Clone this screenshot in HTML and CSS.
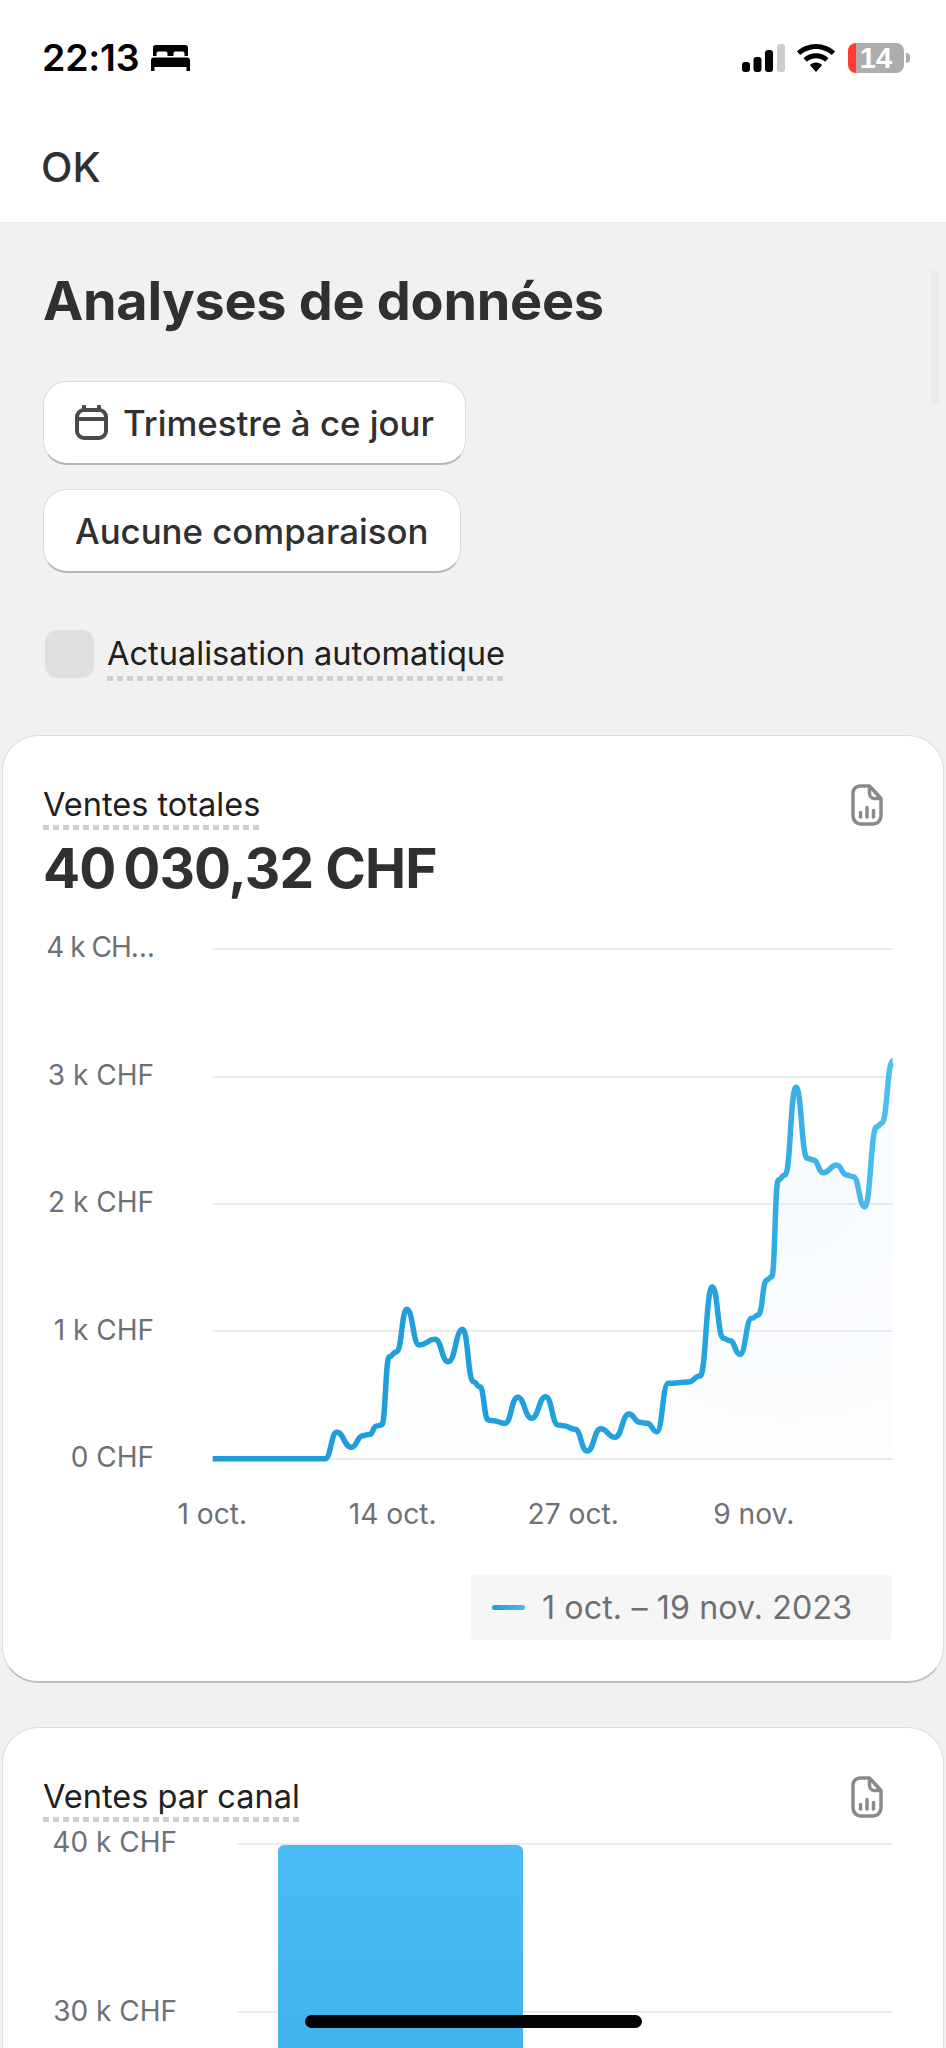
FILE: index.html
```html
<!DOCTYPE html>
<html lang="fr">
<head>
<meta charset="utf-8">
<title>Analyses de données</title>
<link rel="stylesheet" href="styles.css">
</head>
<body>
<header class="top">
  <div class="status">
    <div class="status-left">
      <span class="time">22:13</span>
      <svg class="bed" viewBox="0 0 39 26" aria-hidden="true"><path d="M5 0h29a3 3 0 0 1 3 3v8h-3.500V8.500a2 2 0 0 0-2-2h-7a2 2 0 0 0-2 2V11h-6V8.500a2 2 0 0 0-2-2h-7a2 2 0 0 0-2 2V11H2V3a3 3 0 0 1 3-3z"/><path d="M3 12.500h33a3 3 0 0 1 3 3V26h-3.500v-4h-32v4H0V15.500a3 3 0 0 1 3-3z"/></svg>
    </div>
    <div class="status-right">
      <svg class="signal" viewBox="0 0 43 28" aria-hidden="true"><rect x="0" y="18" width="8" height="10" rx="3"/><rect x="11.500" y="13" width="8" height="15" rx="3"/><rect x="23" y="6" width="8" height="22" rx="3"/><rect class="signal-off" x="35" y="0" width="8" height="28" rx="3"/></svg>
      <svg class="wifi" viewBox="0 0 38 28" aria-hidden="true"><path d="M19 0c7.300 0 14 2.800 19 7.500l-3.200 3.600C30.600 7.200 25 4.900 19 4.900S7.400 7.200 3.200 11.100L0 7.500C5 2.800 11.700 0 19 0z"/><path d="M19 9.300c4.800 0 9.200 1.800 12.500 4.900l-3.300 3.600c-2.400-2.200-5.700-3.600-9.200-3.600s-6.800 1.400-9.200 3.600l-3.300-3.600C9.800 11.100 14.200 9.300 19 9.300z"/><path d="M19 18.500c2.400 0 4.600.9 6.200 2.400L19 28l-6.200-7.100c1.600-1.500 3.800-2.400 6.200-2.400z"/></svg>
      <div class="battery"><span class="battery-level">14</span><span class="battery-nub"></span></div>
    </div>
  </div>
  <div class="nav">OK</div>
</header>

<main class="page">
  <section class="intro">
    <h1 class="title">Analyses de données</h1>
    <div class="filters">
      <button class="btn">
        <svg class="calendar" viewBox="0 0 35 35" aria-hidden="true"><path d="M10 5h15a7 7 0 0 1 7 7v14a7 7 0 0 1-7 7H10a7 7 0 0 1-7-7V12a7 7 0 0 1 7-7z"/><path d="M3 14h29M10 1.500V5M25 1.500V5"/></svg>
        <span>Trimestre à ce jour</span>
      </button>
      <button class="btn btn-plain"><span>Aucune comparaison</span></button>
    </div>
    <div class="auto">
      <span class="check"></span>
      <span class="dotted auto-label">Actualisation automatique</span>
    </div>
  </section>

  <section class="card card-sales">
    <div class="card-head">
      <div class="card-heading">
        <div class="dotted card-title">Ventes totales</div>
        <div class="amount">40&#8239;030,32 CHF</div>
      </div>
      <svg class="doc" viewBox="0 0 32 42" aria-hidden="true"><path d="M9 2h9.500L30 14.500V32a8 8 0 0 1-8 8H10a8 8 0 0 1-8-8V9a7 7 0 0 1 7-7z"/><path d="M18.500 2v7.500a5 5 0 0 0 5 5H30"/><path class="doc-bar" d="M9.500 28.500V33M16 23.500V33M22.500 26.500V33"/></svg>
    </div>
    <div class="line-chart">
      <div class="y-axis">
        <span class="y-cut">4 k CH…</span>
        <span>3 k CHF</span>
        <span>2 k CHF</span>
        <span>1 k CHF</span>
        <span>0 CHF</span>
      </div>
      <svg class="plot" viewBox="212 945 682 520" aria-hidden="true">
        <defs>
          <linearGradient id="lineStroke" gradientUnits="userSpaceOnUse" x1="212" y1="0" x2="892" y2="0">
            <stop offset="0" stop-color="#1f9bd7"/>
            <stop offset="0.75" stop-color="#24a3de"/>
            <stop offset="1" stop-color="#50bdf0"/>
          </linearGradient>
          <radialGradient id="areaFill" gradientUnits="userSpaceOnUse" cx="790" cy="1180" r="330">
            <stop offset="0" stop-color="#f7fbfe"/>
            <stop offset="0.6" stop-color="#fafcfe"/>
            <stop offset="1" stop-color="#fdfeff"/>
          </radialGradient>
        </defs>
        <path class="area" d="M212.700 1458.700L325 1458.700C331 1458.700 331 1432.300 336.700 1432.300C344 1432.300 344 1447.300 351.700 1447.300C357 1447.300 357 1435.700 362.700 1435.700C366 1435.700 366 1434.300 370 1434.300C373 1434.300 373 1426 376.700 1426C379 1426 379 1425 381.700 1425C385.500 1425 385.500 1356.700 389.300 1356.700C393 1356.700 393 1351.700 396.700 1351.700C401.700 1351.700 401.700 1309.300 406.700 1309.300C413 1309.300 413 1345 419 1345C427 1345 427 1339.300 435 1339.300C441.600 1339.300 441.600 1361.700 448.300 1361.700C455.500 1361.700 455.500 1329.300 462.700 1329.300C468 1329.300 468 1381.700 473.300 1381.700C476.600 1381.700 476.600 1386.700 480 1386.700C484 1386.700 484 1420 488.300 1420C490.800 1420 490.800 1420.700 493.300 1420.700C499 1420.700 499 1423.300 505 1423.300C511.300 1423.300 511.300 1397.300 517.700 1397.300C524.700 1397.300 524.700 1418.300 531.700 1418.300C538.700 1418.300 538.700 1396.700 545.700 1396.700C552 1396.700 552 1425 558.300 1425C560.800 1425 560.800 1425.700 563.300 1425.700C569 1425.700 569 1429.300 575 1429.300C581 1429.300 581 1451 587.300 1451C594 1451 594 1428.700 600.700 1428.700C607.800 1428.700 607.800 1437.300 615 1437.300C622 1437.300 622 1414 629 1414C634.500 1414 634.500 1422.300 640 1422.300C643.600 1422.300 643.600 1423.300 647.300 1423.300C652 1423.300 652 1431.700 656.700 1431.700C662.500 1431.700 662.500 1383.300 668.300 1383.300C678.300 1383.300 678.300 1382 688.300 1382C694 1382 694 1376 700 1376C706 1376 706 1286.700 712.300 1286.700C717.800 1286.700 717.800 1338.300 723.300 1338.300C726.600 1338.300 726.600 1340.700 730 1340.700C735 1340.700 735 1354.300 740 1354.300C745.800 1354.300 745.800 1318.300 751.700 1318.300C755 1318.300 755 1315 758.300 1315C762.500 1315 762.500 1280 766.700 1280C769.200 1280 769.200 1276.700 771.700 1276.700C775 1276.700 775 1180 778.300 1180C781.600 1180 781.600 1175 785 1175C790.500 1175 790.500 1087.300 796 1087.300C801.600 1087.300 801.600 1158.300 807.300 1158.300C810.300 1158.300 810.300 1160 813.300 1160C818.300 1160 818.300 1172.700 823.300 1172.700C830 1172.700 830 1165 836.700 1165C841.700 1165 841.700 1175 846.700 1175C850 1175 850 1176.700 853.300 1176.700C859 1176.700 859 1206.700 864.700 1206.700C870.700 1206.700 870.700 1126.700 876.700 1126.700C879.200 1126.700 879.200 1123.300 881.700 1123.300C887.200 1123.300 887.200 1060.700 892.700 1060.700L892.700 1458.700Z"/>
        <path class="grid" d="M212.700 949H892.700M212.700 1077H892.700M212.700 1204H892.700M212.700 1331H892.700M212.700 1459H892.700"/>
        <path class="curve" d="M212.700 1458.700L325 1458.700C331 1458.700 331 1432.300 336.700 1432.300C344 1432.300 344 1447.300 351.700 1447.300C357 1447.300 357 1435.700 362.700 1435.700C366 1435.700 366 1434.300 370 1434.300C373 1434.300 373 1426 376.700 1426C379 1426 379 1425 381.700 1425C385.500 1425 385.500 1356.700 389.300 1356.700C393 1356.700 393 1351.700 396.700 1351.700C401.700 1351.700 401.700 1309.300 406.700 1309.300C413 1309.300 413 1345 419 1345C427 1345 427 1339.300 435 1339.300C441.600 1339.300 441.600 1361.700 448.300 1361.700C455.500 1361.700 455.500 1329.300 462.700 1329.300C468 1329.300 468 1381.700 473.300 1381.700C476.600 1381.700 476.600 1386.700 480 1386.700C484 1386.700 484 1420 488.300 1420C490.800 1420 490.800 1420.700 493.300 1420.700C499 1420.700 499 1423.300 505 1423.300C511.300 1423.300 511.300 1397.300 517.700 1397.300C524.700 1397.300 524.700 1418.300 531.700 1418.300C538.700 1418.300 538.700 1396.700 545.700 1396.700C552 1396.700 552 1425 558.300 1425C560.800 1425 560.800 1425.700 563.300 1425.700C569 1425.700 569 1429.300 575 1429.300C581 1429.300 581 1451 587.300 1451C594 1451 594 1428.700 600.700 1428.700C607.800 1428.700 607.800 1437.300 615 1437.300C622 1437.300 622 1414 629 1414C634.500 1414 634.500 1422.300 640 1422.300C643.600 1422.300 643.600 1423.300 647.300 1423.300C652 1423.300 652 1431.700 656.700 1431.700C662.500 1431.700 662.500 1383.300 668.300 1383.300C678.300 1383.300 678.300 1382 688.300 1382C694 1382 694 1376 700 1376C706 1376 706 1286.700 712.300 1286.700C717.800 1286.700 717.800 1338.300 723.300 1338.300C726.600 1338.300 726.600 1340.700 730 1340.700C735 1340.700 735 1354.300 740 1354.300C745.800 1354.300 745.800 1318.300 751.700 1318.300C755 1318.300 755 1315 758.300 1315C762.500 1315 762.500 1280 766.700 1280C769.200 1280 769.200 1276.700 771.700 1276.700C775 1276.700 775 1180 778.300 1180C781.600 1180 781.600 1175 785 1175C790.500 1175 790.500 1087.300 796 1087.300C801.600 1087.300 801.600 1158.300 807.300 1158.300C810.300 1158.300 810.300 1160 813.300 1160C818.300 1160 818.300 1172.700 823.300 1172.700C830 1172.700 830 1165 836.700 1165C841.700 1165 841.700 1175 846.700 1175C850 1175 850 1176.700 853.300 1176.700C859 1176.700 859 1206.700 864.700 1206.700C870.700 1206.700 870.700 1126.700 876.700 1126.700C879.200 1126.700 879.200 1123.300 881.700 1123.300C887.200 1123.300 887.200 1060.700 892.700 1060.700"/>
      </svg>
    </div>
    <div class="x-axis">
      <span>1 oct.</span>
      <span>14 oct.</span>
      <span>27 oct.</span>
      <span>9 nov.</span>
    </div>
    <div class="legend-row">
      <div class="legend"><span class="legend-mark"></span><span>1 oct. – 19 nov. 2023</span></div>
    </div>
  </section>

  <section class="card card-channel">
    <div class="card-head">
      <div class="card-heading">
        <div class="dotted card-title">Ventes par canal</div>
      </div>
      <svg class="doc" viewBox="0 0 32 42" aria-hidden="true"><path d="M9 2h9.500L30 14.500V32a8 8 0 0 1-8 8H10a8 8 0 0 1-8-8V9a7 7 0 0 1 7-7z"/><path d="M18.500 2v7.500a5 5 0 0 0 5 5H30"/><path class="doc-bar" d="M9.500 28.500V33M16 23.500V33M22.500 26.500V33"/></svg>
    </div>
    <div class="bar-chart">
      <div class="bar-axis">
        <span>40 k CHF</span>
        <span>30 k CHF</span>
      </div>
      <div class="bar-plot">
        <span class="bar-grid"></span>
        <span class="bar-grid"></span>
        <div class="bar"></div>
      </div>
    </div>
  </section>
</main>
<div class="scroll-thumb"></div>
<div class="home-indicator"></div>
</body>
</html>
```

FILE: styles.css
```css
* { box-sizing: border-box; }
html, body { margin: 0; padding: 0; height: 2048px; overflow: hidden; }
body {
  width: 946px;
  background: #f1f1f1;
  color: #303030;
  font-family: Inter, "Liberation Sans", sans-serif;
  position: relative;
}
.top {
  height: 223px;
  background: #fff;
  border-bottom: 1px solid #e9e9e9;
}
.status {
  height: 116px;
  display: flex;
  justify-content: space-between;
  align-items: flex-start;
  padding: 43px 36px 0 42px;
}
.status-left, .status-right { display: flex; align-items: center; }
.status-left { gap: 12px; height: 30px; }
.status-right { height: 30px; }
.time { font-size: 37.500px; font-weight: 600; color: #000; letter-spacing: -0.2px; line-height: 30px; }
.bed { width: 39px; height: 26px; fill: #000; }
.signal { width: 43px; height: 28px; fill: #000; margin-right: 12px; }
.signal-off { fill: #cdcdcd; }
.wifi { width: 38px; height: 28px; fill: #000; margin-right: 13px; }
.battery { display: flex; align-items: center; gap: 2px; }
.battery-level {
  width: 56px;
  height: 30px;
  border-radius: 8px;
  background: linear-gradient(90deg, #ff3b30 0 8px, #adadad 8px);
  color: #fff;
  font-family: "Liberation Sans", Arial, sans-serif;
  font-size: 29px;
  font-weight: 700;
  line-height: 30px;
  text-align: center;
}
.battery-nub { width: 4px; height: 10px; border-radius: 0 4px 4px 0; background: #adadad; }
.nav {
  height: 106px;
  padding: 28px 0 0 41px;
  font-size: 41px;
  font-weight: 500;
  line-height: 46px;
  color: #303030;
}
.intro { padding: 0 44px; height: 512px; }
.title {
  margin: 0 0 0 -1px;
  padding-top: 52px;
  font-size: 54px;
  font-weight: 700;
  line-height: 52px;
  letter-spacing: -0.300px;
  color: #303030;
}
.filters {
  display: flex;
  flex-direction: column;
  align-items: flex-start;
  gap: 24px;
  margin-top: 54px;
  margin-left: -1px;
}
.btn {
  display: flex;
  align-items: center;
  gap: 14px;
  height: 84px;
  padding: 0 31px 0 30px;
  background: #fff;
  border: 1px solid #dcdcdc;
  border-bottom: 2px solid #b5b5b5;
  border-radius: 24px;
  font: 500 34.800px/44px Inter, "Liberation Sans", sans-serif;
  color: #303030;
}
.btn-plain { padding: 0 32px 0 31px; }
.calendar { width: 35px; height: 35px; fill: none; stroke: #4a4a4a; stroke-width: 4; stroke-linecap: round; }
.auto { display: flex; align-items: flex-start; gap: 13px; margin-top: 58px; margin-left: 1px; }
.check { width: 49px; height: 48px; margin-top: -1px; border-radius: 12px; background: #dfdfdf; }
.dotted {
  padding-bottom: 8px;
  background-image: repeating-linear-gradient(90deg, #cfcfcf 0 6px, transparent 6px 10px);
  background-size: 100% 5px;
  background-repeat: no-repeat;
  background-position: left bottom;
}
.auto-label { font-size: 32.600px; line-height: 40px; color: #202020; margin-top: 2px; }
.card {
  margin: 0 2px;
  background: #fff;
  border: 1px solid #dcdcdc;
  border-bottom: 2px solid #bdbdbd;
  border-radius: 36px;
}
.card-sales { height: 948px; padding: 51px 49px 0 41px; }
.card-channel { margin-top: 44px; height: 500px; padding: 51px 49px 0 41px; }
.card-head { display: flex; justify-content: space-between; align-items: flex-start; }
.card-title { display: inline-block; padding-bottom: 7px; font-size: 32.500px; line-height: 36px; color: #202020; margin-left: -1px; }
.amount { font-size: 55px; font-weight: 700; line-height: 60px; margin: 8px 0 0 -1px; letter-spacing: -0.9px; color: #303030; }
.doc { width: 32px; height: 42px; fill: none; stroke: #8a8a8a; stroke-width: 3.5; margin: -3px 11px 0 0; stroke-linejoin: round; flex: none; }
.doc-bar { stroke-linecap: round; }
.line-chart { display: flex; align-items: flex-start; margin-top: 47px; }
.y-axis {
  flex: none;
  width: 110px;
  margin: -15px 58px 0 0;
  height: 544px;
  display: flex;
  flex-direction: column;
  justify-content: space-between;
  align-items: flex-end;
  font-size: 28px;
  line-height: 34px;
  color: #6d7175;
  white-space: nowrap;
}
.y-cut { letter-spacing: -1px; }
.plot { width: 682px; height: 520px; flex: none; }
.grid { stroke: #ebebeb; stroke-width: 2; fill: none; }
.area { fill: url(#areaFill); stroke: none; }
.curve { stroke: url(#lineStroke); stroke-width: 5.500; fill: none; stroke-linejoin: round; filter: blur(0.4px); }
.x-axis { display: flex; margin-top: 22px; height: 36px; font-size: 28.200px; line-height: 36px; color: #6d7175; padding-left: 78px; }
.x-axis span { width: 180.500px; text-align: center; }
.legend-row { display: flex; justify-content: flex-end; margin-top: 43px; margin-right: 2px; }
.legend {
  display: flex;
  align-items: center;
  gap: 17px;
  width: 421px;
  height: 65px;
  padding-left: 21px;
  background: #f6f6f7;
  border-radius: 4px;
  font-size: 32.200px;
  color: #6d7175;
  letter-spacing: 0.1px;
}
.legend-mark { width: 33px; height: 5px; border-radius: 3px; background: linear-gradient(90deg, #1f9bd7, #4db9ec); }
.bar-chart { display: flex; margin-top: 3px; }
.bar-axis {
  flex: none;
  width: 133px;
  margin-right: 60px;
  height: 203px;
  display: flex;
  flex-direction: column;
  justify-content: space-between;
  align-items: flex-end;
  font-size: 28px;
  line-height: 34px;
  color: #6d7175;
  white-space: nowrap;
}
.bar-plot { position: relative; flex: 1; height: 300px; margin: 18px 2px 0 0; }
.bar-grid { display: block; height: 2px; background: #ebebeb; margin-bottom: 166px; }
.bar { position: absolute; left: 41px; top: 2px; width: 245px; height: 300px; border-radius: 6px 6px 0 0; background: linear-gradient(180deg, #4abcf5, #3db1eb); }
.scroll-thumb { position: absolute; left: 931px; top: 270px; width: 8px; height: 135px; border-radius: 4px; background: #ebebeb; }
.home-indicator { position: absolute; left: 305px; top: 2015px; width: 337px; height: 13px; border-radius: 7px; background: #050505; }
```
